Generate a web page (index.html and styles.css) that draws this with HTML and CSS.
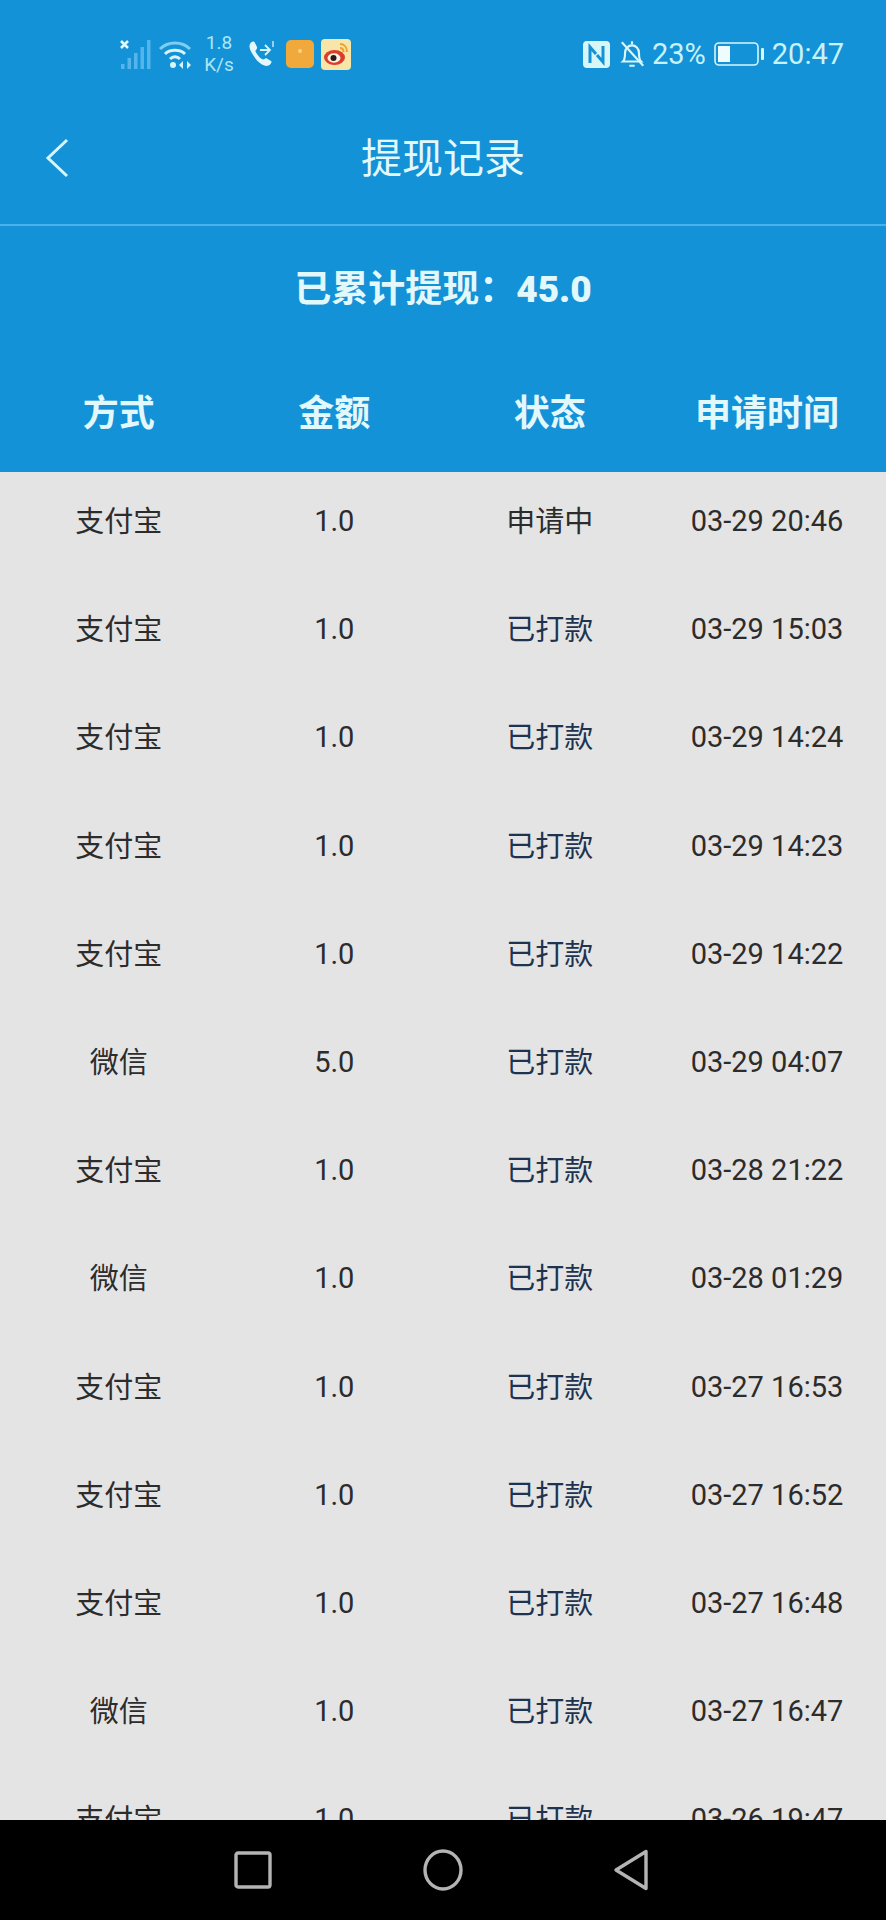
FILE: index.html
```html
<!DOCTYPE html>
<html lang="zh-CN">
<head>
<meta charset="UTF-8">
<meta name="viewport" content="width=device-width, initial-scale=1.0">
<title>提现记录</title>
<link rel="stylesheet" href="styles.css">
</head>
<body>
<div class="page">
  <div class="top">
    <div class="statusbar">
      <div class="status-left">
        <svg class="ic-signal" width="32" height="32" viewBox="0 0 32 32">
          <path d="M1 3l7 7M8 3l-7 7" stroke="#e4f7fa" stroke-width="2.6" fill="none"/>
          <rect x="1" y="26" width="3.5" height="5" fill="#54b4ec"/>
          <rect x="7.5" y="20" width="3.5" height="11" fill="#54b4ec"/>
          <rect x="14" y="15" width="3.5" height="16" fill="#54b4ec"/>
          <rect x="20.5" y="9" width="3.5" height="22" fill="#54b4ec"/>
          <rect x="27" y="2" width="3.5" height="29" fill="#54b4ec"/>
        </svg>
        <svg class="ic-wifi" width="34" height="30" viewBox="0 0 34 30">
          <path d="M2 10C10 2 24 2 32 10" stroke="#7fcdf0" stroke-width="3" fill="none"/>
          <path d="M7 15C12 10 22 10 27 15" stroke="#d8f4f8" stroke-width="3" fill="none"/>
          <path d="M12 20C15 17 19 17 22 20" stroke="#d8f4f8" stroke-width="3" fill="none"/>
          <circle cx="15" cy="26" r="3" fill="#d8f4f8"/>
          <path d="M21 26l4-4v8zM33 26l-4-4v8z" fill="#d8f4f8"/>
        </svg>
        <div class="speed">1.8<br>K/s</div>
        <svg class="ic-call" width="30" height="30" viewBox="0 0 30 30">
          <path d="M3 5C5 2 7 2 8 4l2 4c.5 1 0 2-1 3-1 1-.5 2 1 4 2 3 4 5 6 5.500 1 .3 2-1 3-1.500l5 3c1 1 .5 2-1 3.500-3 3-8 1-13-4C5 15 1 9 3 5z" fill="#e4f7fa"/>
          <path d="M13 11h9M18 6l5 5-5 5" stroke="#d8f4f8" stroke-width="1.800" fill="none"/>
          <path d="M26 2v6" stroke="#d8f4f8" stroke-width="1.300"/>
        </svg>
        <div class="app-orange"><span class="app-orange-dot"></span></div>
        <svg class="app-weibo" width="30" height="31" viewBox="0 0 30 31">
          <rect width="30" height="31" rx="4" fill="#f8e6a8"/>
          <path d="M19 5c4 0 7 3 7 8M19 9c2 0 3.500 1.500 3.500 4" stroke="#eea22e" stroke-width="2" fill="none"/>
          <ellipse cx="13.500" cy="18.500" rx="10.500" ry="7.500" fill="#dc3c2c"/>
          <ellipse cx="13" cy="19" rx="6.500" ry="4.700" fill="#fbf2e0"/>
          <circle cx="12.500" cy="19" r="3" fill="#2a1a14"/>
        </svg>
      </div>
      <div class="status-right">
        <svg class="ic-nfc" width="27" height="27" viewBox="0 0 27 27">
          <rect width="27" height="27" rx="4" fill="#d8f6f8"/>
          <path d="M7 22V6l6 7M20 5v16l-6-7" stroke="#1392d8" stroke-width="3" fill="none"/>
        </svg>
        <svg class="ic-bell" width="28" height="30" viewBox="0 0 25 28">
          <path d="M4 21c2-2 2-4 2-8 0-4 3-7 6.500-7S19 9 19 13c0 4 0 6 2 8z" stroke="#d8f6f8" stroke-width="2" fill="none"/>
          <path d="M10 25h5M12.500 2v3" stroke="#d8f6f8" stroke-width="2"/>
          <path d="M3 3l20 22" stroke="#d8f6f8" stroke-width="2"/>
        </svg>
        <span class="percent">23%</span>
        <svg class="ic-battery" width="50" height="24" viewBox="0 0 50 24">
          <rect x="1" y="1" width="43" height="22" rx="4" stroke="#d8f6f8" stroke-width="1.600" fill="none"/>
          <rect x="4" y="4" width="12" height="16" fill="#eefcfd"/>
          <rect x="47" y="6" width="3" height="12" rx="1" fill="#d8f6f8"/>
        </svg>
        <span class="clock">20:47</span>
      </div>
    </div>
    <div class="navbar">
      <svg class="back" width="24" height="40" viewBox="0 0 24 40">
        <path d="M22 2L3 20 22 38" stroke="#d8f6f8" stroke-width="3" fill="none"/>
      </svg>
      <div class="nav-title">提现记录</div>
    </div>
    <div class="summary">已累计提现：<b class="num">45.0</b></div>
    <div class="row head">
      <div>方式</div>
      <div>金额</div>
      <div>状态</div>
      <div>申请时间</div>
    </div>
  </div>

  <div class="list">
    <div class="row"><div>支付宝</div><div class="num-cell">1.0</div><div>申请中</div><div class="num-cell">03-29 20:46</div></div>
    <div class="row"><div>支付宝</div><div class="num-cell">1.0</div><div class="paid">已打款</div><div class="num-cell">03-29 15:03</div></div>
    <div class="row"><div>支付宝</div><div class="num-cell">1.0</div><div class="paid">已打款</div><div class="num-cell">03-29 14:24</div></div>
    <div class="row"><div>支付宝</div><div class="num-cell">1.0</div><div class="paid">已打款</div><div class="num-cell">03-29 14:23</div></div>
    <div class="row"><div>支付宝</div><div class="num-cell">1.0</div><div class="paid">已打款</div><div class="num-cell">03-29 14:22</div></div>
    <div class="row"><div>微信</div><div class="num-cell">5.0</div><div class="paid">已打款</div><div class="num-cell">03-29 04:07</div></div>
    <div class="row"><div>支付宝</div><div class="num-cell">1.0</div><div class="paid">已打款</div><div class="num-cell">03-28 21:22</div></div>
    <div class="row"><div>微信</div><div class="num-cell">1.0</div><div class="paid">已打款</div><div class="num-cell">03-28 01:29</div></div>
    <div class="row"><div>支付宝</div><div class="num-cell">1.0</div><div class="paid">已打款</div><div class="num-cell">03-27 16:53</div></div>
    <div class="row"><div>支付宝</div><div class="num-cell">1.0</div><div class="paid">已打款</div><div class="num-cell">03-27 16:52</div></div>
    <div class="row"><div>支付宝</div><div class="num-cell">1.0</div><div class="paid">已打款</div><div class="num-cell">03-27 16:48</div></div>
    <div class="row"><div>微信</div><div class="num-cell">1.0</div><div class="paid">已打款</div><div class="num-cell">03-27 16:47</div></div>
    <div class="row"><div>支付宝</div><div class="num-cell">1.0</div><div class="paid">已打款</div><div class="num-cell">03-26 19:47</div></div>
  </div>

  <div class="softkeys">
    <svg class="key-square" width="38" height="38" viewBox="0 0 38 38"><rect x="2" y="2" width="34" height="34" rx="2" stroke="#b4b4b4" stroke-width="3.400" fill="none"/></svg>
    <svg class="key-circle" width="40" height="42" viewBox="0 0 40 42"><ellipse cx="20" cy="21" rx="18" ry="19" stroke="#b4b4b4" stroke-width="3.400" fill="none"/></svg>
    <svg class="key-back" width="36" height="42" viewBox="0 0 36 42"><path d="M33 2.500V39.500L3 21z" stroke="#b4b4b4" stroke-width="3.400" stroke-linejoin="round" fill="none"/></svg>
  </div>
</div>
</body>
</html>
```

FILE: styles.css
```css
* {
    box-sizing: border-box;
}

body {
    margin: 0;
    font-family: Roboto, "Noto Sans CJK SC", sans-serif;
    background: #000;
}

.page {
    width: 886px;
    height: 1920px;
    display: flex;
    flex-direction: column;
    overflow: hidden;
}

.top {
    height: 472px;
    flex: none;
    background-color: #1392d8;
    color: #e2f8fa;
}

.statusbar {
    height: 109px;
    padding: 36px 42px 0 120px;
    display: flex;
    justify-content: space-between;
    align-items: flex-start;
    color: #c8f2f6;
}

.status-left,
.status-right {
    display: flex;
    align-items: center;
    height: 36px;
}

.ic-wifi {
    margin-left: 6px;
}

.speed {
    margin-left: 11px;
    width: 32px;
    font-size: 19px;
    line-height: 22px;
    text-align: center;
    color: #aee6f2;
}

.ic-call {
    margin-left: 12px;
}

.app-orange {
    margin-left: 9px;
    width: 28px;
    height: 28px;
    border-radius: 5px;
    background-color: #f2a93c;
    display: flex;
    justify-content: center;
    padding-top: 9px;
}

.app-orange-dot {
    width: 4px;
    height: 4px;
    border-radius: 50%;
    background-color: #f9d48e;
}

.app-weibo {
    margin-left: 7px;
}

.ic-bell {
    margin-left: 8px;
}

.percent {
    margin-left: 6px;
    font-size: 29px;
}

.ic-battery {
    margin-left: 8px;
}

.clock {
    margin-left: 8px;
    font-size: 29px;
}

.navbar {
    height: 117px;
    padding: 29px 0 0 45px;
    border-bottom: 2px solid #4bb0ee;
    display: flex;
    align-items: flex-start;
    position: relative;
}

.nav-title {
    position: absolute;
    left: 0;
    right: 0;
    top: 18px;
    text-align: center;
    font-size: 41px;
    line-height: 56px;
    font-family: "Noto Sans CJK SC", sans-serif;
}

.summary {
    height: 102px;
    padding-top: 35px;
    text-align: center;
    font-size: 37px;
    line-height: 50px;
    font-weight: bold;
    font-family: "Noto Sans CJK SC", sans-serif;
}

.num {
    font-family: Roboto, sans-serif;
}

.row {
    display: grid;
    grid-template-columns: 215.5px 215.5px 215.5px 219px;
    padding-left: 11px;
    height: 108.2px;
    align-items: center;
    text-align: center;
    font-size: 29px;
    color: #2c2c2c;
    flex: none;
}

.row.head {
    height: 142px;
    padding-top: 22px;
    font-size: 36px;
    font-weight: bold;
    color: #e2f8fa;
    font-family: "Noto Sans CJK SC", sans-serif;
}

.list {
    flex: 1;
    min-height: 0;
    overflow: hidden;
    background-color: #e4e4e4;
    display: flex;
    flex-direction: column;
}

.list .row:first-child {
    margin-top: -7px;
}

.num-cell {
    padding-top: 4px;
}

.paid {
    color: #1d3350;
}

.softkeys {
    height: 100px;
    flex: none;
    padding-left: 234px;
    background-color: #000;
    display: flex;
    align-items: center;
}

.key-square {
    margin-right: 151px;
}

.key-circle {
    margin-right: 150px;
}
```
